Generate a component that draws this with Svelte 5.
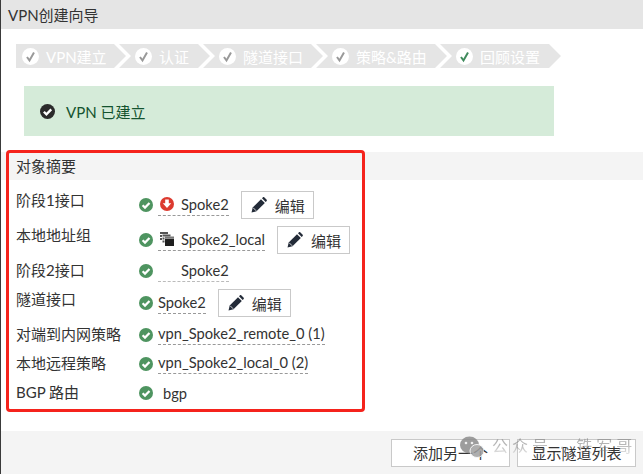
<script>
  const steps = [
    { label: 'VPN建立', w: 110 },
    { label: '认证', w: 91 },
    { label: '隧道接口', w: 120 },
    { label: '策略&路由', w: 131 },
    { label: '回顾设置', w: 121, last: true }
  ];
</script>

{#snippet ok()}
  <svg class="ok" viewBox="0 0 14 14" width="14" height="14">
    <circle cx="7" cy="7" r="7" fill="#4e9460" />
    <path d="M3.600 7.200 6 9.600 10.500 5" fill="none" stroke="#fff" stroke-width="2.200" />
  </svg>
{/snippet}

{#snippet edit()}
  <button class="edit">
    <svg viewBox="0 0 16 16" width="16" height="16">
      <path d="M.5 15.500l1.200-5L10 2.200 13.800 6 5.500 14.300z" fill="#232b38" />
      <path d="M11 1.200l1-.9c.4-.3.9-.3 1.200 0l2.500 2.500c.3.300.3.800 0 1.200l-1 1z" fill="#232b38" />
      <path d="M2.200 10.800l3 3" stroke="#fff" stroke-width=".8" />
    </svg>
    <span>编辑</span>
  </button>
{/snippet}

<div class="page">
  <header class="title">VPN创建向导</header>

  <div class="steps">
    {#each steps as s}
      <div class="step" style="width: {s.w}px">
        <svg viewBox="0 0 17 17" width="17" height="17">
          <circle cx="8.500" cy="8.500" r="8.500" fill="#fff" />
          <path d="M5 9l2.500 3.500L12 4.500" fill="none" stroke={s.last ? '#3f8a5c' : '#999'} stroke-width="2" />
        </svg>
        <span>{s.label}</span>
      </div>
    {/each}
  </div>

  <div class="banner">
    <svg viewBox="0 0 14 14" width="15" height="15">
      <circle cx="7" cy="7" r="7" fill="#2b2b2b" />
      <path d="M3.600 7.200 6 9.600 10.500 5" fill="none" stroke="#fff" stroke-width="2.200" />
    </svg>
    <span>VPN 已建立</span>
  </div>

  <div class="section">对象摘要</div>

  <div class="rows">
    <div class="row r1">
      <div class="label">阶段1接口</div>
      <div class="value">
        {@render ok()}
        <span class="link icon-link">
          <svg viewBox="0 0 14 14" width="14" height="14">
            <circle cx="7" cy="7" r="7" fill="#dc3a2f" />
            <path d="M5.200 2.500h3.600v3.700h2.400L7 11 2.800 6.200h2.400z" fill="#fff" />
          </svg>
          <span>Spoke2</span>
        </span>
        {@render edit()}
      </div>
    </div>
    <div class="row r2">
      <div class="label">本地地址组</div>
      <div class="value">
        {@render ok()}
        <span class="link icon-link">
          <svg viewBox="0 0 14 14" width="14" height="14">
            <path d="M0 0h8v2H0zM0 3h2v2H0zM0 6h2v2H0zM2.500 2.500h8v2h-8zM2.500 5.500h2v2h-2zM2.500 8.500h2v2h-2z" fill="#555" />
            <path d="M5 4.500h9V6H5z" fill="#777" />
            <path d="M5 6.500h9V14H5z" fill="#1f1f1f" />
          </svg>
          <span>Spoke2_local</span>
        </span>
        {@render edit()}
      </div>
    </div>
    <div class="row r3">
      <div class="label">阶段2接口</div>
      <div class="value">
        {@render ok()}
        <span class="link bare">Spoke2</span>
      </div>
    </div>
    <div class="row r4">
      <div class="label">隧道接口</div>
      <div class="value">
        {@render ok()}
        <span class="link">Spoke2</span>
        {@render edit()}
      </div>
    </div>
    <div class="row r5">
      <div class="label">对端到内网策略</div>
      <div class="value">
        {@render ok()}
        <span class="link">vpn_Spoke2_remote_0 (1)</span>
      </div>
    </div>
    <div class="row r5">
      <div class="label">本地远程策略</div>
      <div class="value">
        {@render ok()}
        <span class="link">vpn_Spoke2_local_0 (2)</span>
      </div>
    </div>
    <div class="row r5">
      <div class="label">BGP 路由</div>
      <div class="value">
        {@render ok()}
        <span class="plain">bgp</span>
      </div>
    </div>
  </div>

  <footer class="footer">
    <button>添加另一个</button>
    <button>显示隧道列表</button>
    <div class="watermark">
      <svg viewBox="0 0 24 22" width="24" height="22">
        <ellipse cx="9.500" cy="9" rx="9.500" ry="8.500" fill="#8d8d8d" />
        <ellipse cx="17" cy="15" rx="7" ry="6.500" fill="#a0a0a0" stroke="#f4f4f4" />
        <circle cx="6" cy="7" r="1.300" fill="#eee" />
        <circle cx="12" cy="7" r="1.300" fill="#eee" />
      </svg>
      <span class="wm-text">公众号 · 铁军哥</span>
    </div>
  </footer>

  <div class="annotation"></div>
</div>

<style>
  :global(body) {
    margin: 0;
    background: #fff;
  }

  .page {
    position: relative;
    display: flex;
    flex-direction: column;
    height: 474px;
    width: 643px;
    box-sizing: border-box;
    overflow: hidden;
    border-left: 1px solid #3a3a3a;
    font-family: Lato, "Noto Sans CJK SC", sans-serif;
    font-size: 15px;
    color: #333;
  }

  .title {
    height: 29px;
    line-height: 30px;
    padding-left: 7px;
    background: #e5e5e5;
  }

  .steps {
    display: flex;
    margin: 15px 0 0 15px;
    height: 24px;
  }

  .step {
    display: flex;
    flex: none;
    align-items: center;
    gap: 7px;
    box-sizing: border-box;
    height: 24px;
    padding-left: 16px;
    margin-right: -7px;
    background: #e5e5e5;
    color: #fff;
    clip-path: polygon(0 0, calc(100% - 12px) 0, 100% 50%, calc(100% - 12px) 100%, 0 100%, 12px 50%);
  }

  .step:first-child {
    padding-left: 6px;
    clip-path: polygon(0 0, calc(100% - 12px) 0, 100% 50%, calc(100% - 12px) 100%, 0 100%);
  }

  .banner {
    display: flex;
    align-items: center;
    gap: 11px;
    box-sizing: border-box;
    width: 530px;
    height: 50px;
    margin: 18px 0 0 23px;
    padding-left: 16px;
    background: #d5ebd9;
    color: #14532f;
  }

  .section {
    height: 28px;
    line-height: 29px;
    margin-top: 16px;
    padding-left: 15px;
    background: #f4f4f4;
  }

  .rows {
    padding-left: 15px;
  }

  .row {
    display: grid;
    grid-template-columns: 123px 1fr;
  }

  .r1 {
    height: 35px;
    margin-top: 9px;
  }

  .r2 {
    height: 35px;
  }

  .r3 {
    height: 29px;
  }

  .r4 {
    height: 35px;
  }

  .r5 {
    height: 29px;
  }

  .label {
    line-height: 22px;
    white-space: nowrap;
  }

  .r5 .label {
    line-height: 23px;
  }

  .value {
    display: flex;
    align-items: flex-start;
    gap: 5px;
    white-space: nowrap;
  }

  .r1 .value,
  .r2 .value {
    padding-top: 4px;
  }

  .r4 .value {
    padding-top: 3px;
  }

  .ok {
    margin-top: 5px;
    flex: none;
  }

  .link {
    height: 22px;
    line-height: 23px;
    border-bottom: 1px dashed #999;
    font-size: 14.700px;
  }

  .r5 .link {
    height: 21px;
    line-height: 21px;
  }

  .icon-link {
    display: inline-flex;
    align-items: center;
    gap: 7px;
    padding-left: 2px;
  }

  .bare {
    padding-left: 23px;
    border-bottom-color: #bbb;
  }

  .plain {
    margin-left: 5px;
    line-height: 24px;
    font-size: 14.700px;
  }

  .edit {
    display: inline-flex;
    align-items: center;
    gap: 8px;
    height: 28px;
    width: 73px;
    padding: 0 0 0 9px;
    margin: -2px 0 0 7px;
    box-sizing: border-box;
    background: #fff;
    border: 1px solid #c9c9c9;
    font: inherit;
    color: #333;
  }

  .footer {
    position: absolute;
    left: 0;
    right: 0;
    bottom: 0;
    height: 43px;
    display: flex;
    justify-content: flex-end;
    align-items: center;
    gap: 7px;
    padding-right: 7px;
    background: #f4f4f4;
  }

  .footer button {
    width: 119px;
    height: 28px;
    background: #fff;
    border: 1px solid #c9c9c9;
    font: inherit;
    color: #333;
  }

  .watermark {
    position: absolute;
    left: 459px;
    top: 5px;
    display: flex;
    align-items: flex-start;
    gap: 8px;
    opacity: 0.85;
    pointer-events: none;
  }

  .wm-text {
    color: rgba(130, 130, 130, 0.7);
    font-size: 16px;
    line-height: 20px;
    letter-spacing: 4px;
    -webkit-mask-image: linear-gradient(#000 40%, rgba(0, 0, 0, 0.25));
    mask-image: linear-gradient(#000 40%, rgba(0, 0, 0, 0.25));
  }

  .annotation {
    position: absolute;
    left: 5px;
    top: 150px;
    width: 353px;
    height: 256px;
    border: 3px solid #f5231c;
    border-radius: 4px;
  }
</style>
